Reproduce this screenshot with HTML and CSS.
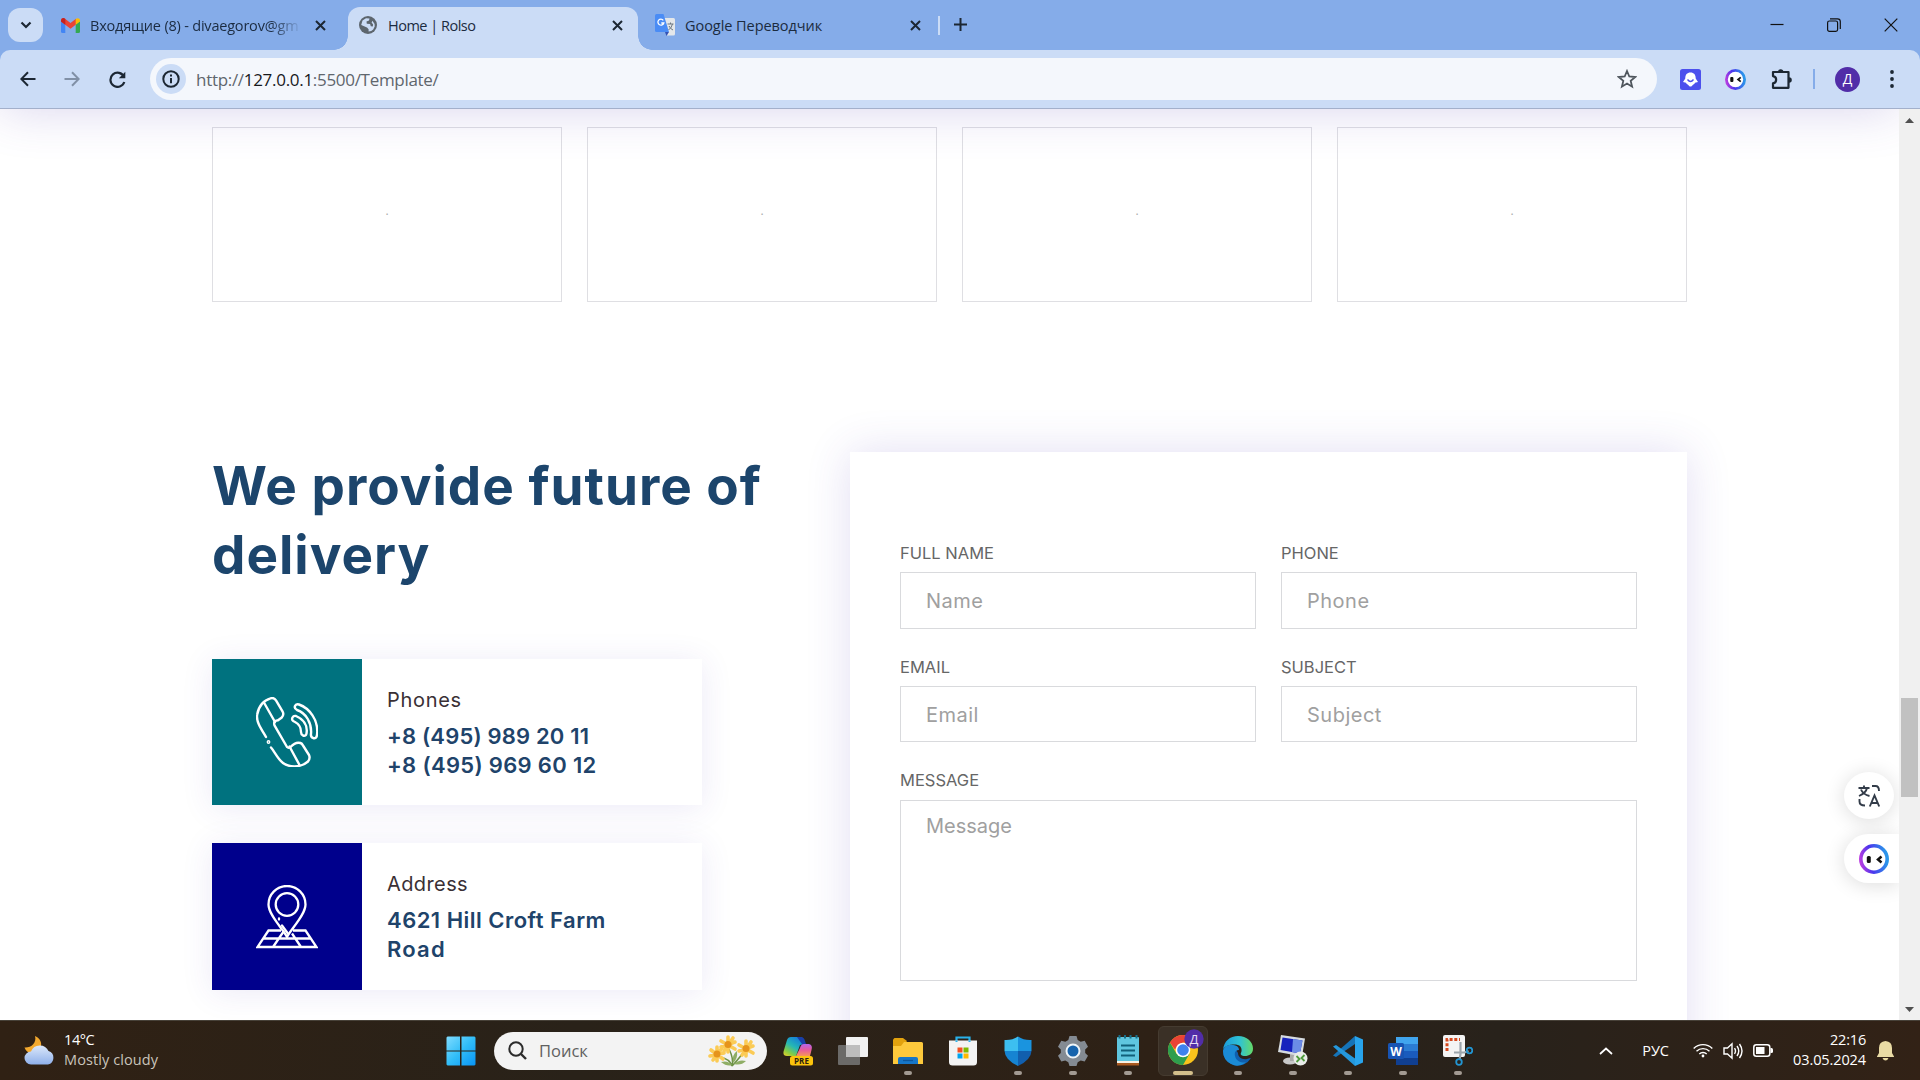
FILE: index.html
```html
<!DOCTYPE html>
<html lang="ru">
<head>
<meta charset="utf-8">
<title>Home | Rolso</title>
<link rel="stylesheet" href="styles.css">
</head>
<body>
<div class="screen">
  <header class="tabstrip">
    <button class="tab-search"><svg width="12" height="8" viewBox="0 0 12 8"><path d="M1.5 1.5 6 6l4.5-4.5" fill="none" stroke="#1c2733" stroke-width="2.2"/></svg></button>
    <div class="tab tab-mail">
      <svg class="favicon" width="19" height="15" viewBox="0 0 19 15"><path d="M0 3v10.5Q0 15 1.5 15H4.300V6.500z" fill="#4285f4"/><path d="M19 3v10.500q0 1.500-1.500 1.500h-2.800V6.500z" fill="#34a853"/><path d="M0 2.500C0 .5 2.200-.5 4 .8L9.500 5 15 .8v5.700l-5.500 4.200L0 3.600z" fill="#ea4335"/><path d="M0 2.500Q.3 0 2.500.1 3.500.2 4.300 1v5.800L0 3.600z" fill="#c5221f"/><path d="M14.700 1C16.500-.6 19 .2 19 2.500v1.100l-4.300 3.200z" fill="#fbbc04"/></svg>
      <span class="tab-title fade">Входящие (8) - divaegorov@gm</span>
      <svg class="close" width="11" height="11" viewBox="0 0 11 11"><path d="m1 1 9 9M10 1l-9 9"/></svg>
    </div>
    <div class="tab tab-active">
      <svg class="favicon" width="18" height="18" viewBox="0 0 18 18"><circle cx="9" cy="9" r="9" fill="#5d666e"/><path d="M3.500 4.500 7 2.200l3.500.3-.5 2-2.500 1 .3 2.200 3.300.3.700 2.300 2 .2.300-2-1.500-2 .8-1.800 2.200 3.200.1 2.600-1.500 3-2 1.500-2.600.4v-2.200l-1.600-1.800L4.500 10 2.200 9z" fill="#cbdcf6"/></svg>
      <span class="tab-title">Home | Rolso</span>
      <svg class="close" width="11" height="11" viewBox="0 0 11 11"><path d="m1 1 9 9M10 1l-9 9"/></svg>
    </div>
    <div class="tab tab-translate">
      <svg class="favicon" width="20" height="22" viewBox="0 0 20 22"><path d="M8 4h10.500Q20 4 20 5.500V20q0 1.500-1.500 1.500H12z" fill="#e4e7ea"/><path d="M10 18h4l-2.500 4z" fill="#3452b5"/><path d="M1.500 0h7L14 18H1.500Q0 18 0 16.500v-15Q0 0 1.500 0z" fill="#4a8cf5"/><path d="M8.300 6.300A3 3 0 1 0 8.800 9H6.300" fill="none" stroke="#fff" stroke-width="1.300"/><path d="M12.500 10h6M15.500 8.500V10M17.500 10q-1 4-4 6M14 12q1.500 3 4 4" fill="none" stroke="#6c7780"/></svg>
      <span class="tab-title">Google Переводчик</span>
      <svg class="close" width="11" height="11" viewBox="0 0 11 11"><path d="m1 1 9 9M10 1l-9 9"/></svg>
    </div>
    <i class="tab-divider"></i>
    <svg class="new-tab" width="13" height="13" viewBox="0 0 13 13"><path d="M6.500 0v13M0 6.500h13" stroke="#1c2733" stroke-width="2"/></svg>
    <div class="window-buttons">
      <svg width="14" height="14" viewBox="0 0 14 14"><path d="M.5 6.500h13"/></svg>
      <svg width="14" height="14" viewBox="0 0 14 14"><rect x=".6" y="3" width="10" height="10.300" rx="1.800"/><path d="M3 .8h7.500q2.800 0 2.800 2.800v7.400"/></svg>
      <svg width="14" height="14" viewBox="0 0 14 14"><path d="m.7.700 12.600 12.600M13.300.700.700 13.300"/></svg>
    </div>
  </header>

  <nav class="toolbar">
    <svg class="nav-back" width="16" height="16" viewBox="0 0 16 16"><path d="M15.500 8H1.800M8 1.300 1.300 8 8 14.700" fill="none" stroke="#1c2733" stroke-width="2"/></svg>
    <svg class="nav-forward" width="16" height="16" viewBox="0 0 16 16"><path d="M.5 8h13.700M8 1.300 14.700 8 8 14.700" fill="none" stroke="#8190a6" stroke-width="2"/></svg>
    <svg class="nav-reload" width="17" height="17" viewBox="0 0 17 17"><path d="M15 5.800A7.100 7.100 0 1 0 15.300 11" fill="none" stroke="#1c2733" stroke-width="2.200"/><path d="M16.300.8v6.500H9.800z" fill="#1c2733"/></svg>
    <div class="omnibox">
      <span class="site-info"><svg width="18" height="18" viewBox="0 0 18 18"><circle cx="9" cy="9" r="7.700" fill="none" stroke="#1c2733" stroke-width="2"/><path d="M9 4.600v2M9 7.900v5.400" stroke="#1c2733" stroke-width="2"/></svg></span>
      <span class="url">http://<b>127.0.0.1</b>:5500/Template/</span>
      <svg class="star" width="20" height="20" viewBox="0 0 20 20"><path d="m10 2 2.300 5.500 6 .5-4.600 3.900 1.400 5.800-5.100-3.100-5.100 3.100 1.400-5.800L1.700 8l6-.5z" fill="none" stroke="#4f565d" stroke-width="1.800"/></svg>
    </div>
    <svg class="ext-ghost" width="21" height="21" viewBox="0 0 21 21"><rect width="21" height="21" rx="2.500" fill="#4c50ed"/><path d="M10.500 3.500c3.500 0 5.300 2.300 5.200 6l2.300 3.500-3 .8c-.5 2-2 1.300-2.500 2.500-.9 1.700-3.100 1.700-4 0-.5-1.200-2-.5-2.500-2.500l-3-.8 2.300-3.500c-.1-3.700 1.700-6 5.200-6z" fill="#fff"/><path d="M7.500 10.500q3 4 6 0" fill="none" stroke="#4c50ed" stroke-width="1.300"/></svg>
    <svg class="ext-bot" width="21" height="21" viewBox="0 0 30 30"><defs><linearGradient id="ring" x1="0" y1=".75" x2="1" y2=".6"><stop offset="0" stop-color="#b93de0"/><stop offset=".4" stop-color="#4b35ed"/><stop offset="1" stop-color="#2b96ea"/></linearGradient></defs><circle cx="15" cy="15" r="13" fill="#fff" stroke="url(#ring)" stroke-width="4"/><rect x="7.500" y="11.500" width="4.500" height="7" rx="1.500" fill="#111"/><path d="m22.500 12-3.800 3 3.800 3" fill="none" stroke="#111" stroke-width="2.500"/></svg>
    <svg class="ext-puzzle" width="21" height="21" viewBox="0 0 21 21"><path d="M2 3h15.500v15.800H2V14.300c4.200-.8 4.200-6.500 0-7.200z" fill="none" stroke="#1c2733" stroke-width="2.200" stroke-linejoin="round"/><path d="M7 3a2.700 2.700 0 0 1 5.400 0M18 8.200a2.800 2.800 0 0 1 0 5.600" fill="#1c2733"/></svg>
    <i class="toolbar-divider"></i>
    <span class="avatar">Д</span>
    <svg class="menu" width="4" height="18" viewBox="0 0 4 18"><circle cx="2" cy="2" r="1.900"/><circle cx="2" cy="9" r="1.900"/><circle cx="2" cy="16" r="1.900"/></svg>
  </nav>

  <div class="viewport">
    <main class="page">
      <div class="sticky-shadow"></div>
      <section class="brands">
        <div class="brand">.</div><div class="brand">.</div><div class="brand">.</div><div class="brand">.</div>
      </section>
      <section class="contact">
        <div class="contact-info">
          <h2>We provide future of<br>delivery</h2>
          <article class="info-card">
            <div class="info-icon teal">
              <svg width="62" height="70" viewBox="0 0 62 70" fill="none" stroke="#fff" stroke-width="2.400" stroke-linecap="round" stroke-linejoin="round"><path d="M10 40C4 30 0 24 1.200 17.500 2.500 9 8 3 14.500 1.300q3.500-1 5.500 2l6.500 11q2 3.500-1 6.500l-3.500 2.500q-5 .5-3.500 5L31 50q1.500 1.500 3.500 0 5-5.500 10-4 1.500.5 2.500 2.500l6 9.500q1.500 3.500-1 6.500C44 71.500 32 70 27 66 21 61 19 55 15 50.500"/><path d="M8.500 6.500 19 25M33.500 49.500l10 18.500"/><circle cx="12.500" cy="45" r=".7"/><path d="M43 7.500C53 11 63 23 61 38q-.5 4-4 3-2.500-1-2-4C56 26 50 16 41 13q-3-1.500-2-4 1-2.500 4-1.500zM40 19c7 3 12 9 10.500 17.500q-.5 3-3.500 2-2-1-2-3.500 0-7-6-10-4-1.500-2.500-4.500 1-2 3.500-1.500z"/></svg>
            </div>
            <div class="info-text"><p class="t-phones">Phones</p><h4><span class="t-ph1">+8 (495) 989 20 11</span><br><span class="t-ph2">+8 (495) 969 60 12</span></h4></div>
          </article>
          <article class="info-card tall">
            <div class="info-icon navy">
              <svg width="62" height="64" viewBox="0 0 62 64" fill="none" stroke="#fff" stroke-width="2.300"><path d="M31 52C27 44 12.500 30 12.500 19.500a18.500 18.500 0 0 1 37 0C49.500 30 35 44 31 52z"/><circle cx="31" cy="19.500" r="11.300"/><path d="M25 45.500H12.500L1.500 62h59L49.500 45.500H37M8 53.500h46M17 62l7.500-11M45 62 36 48.500M24.500 51 28 46"/><path d="m26 40.500 5.500 7.500M23 33.500v1" stroke-linecap="round"/></svg>
            </div>
            <div class="info-text"><p>Address</p><h4><span class="t-ad1">4621 Hill Croft Farm</span><br><span class="t-ad2">Road</span></h4></div>
          </article>
        </div>
        <form class="contact-form">
          <label class="field">FULL NAME<input type="text" placeholder="Name"></label>
          <label class="field">PHONE<input type="text" placeholder="Phone"></label>
          <label class="field short">EMAIL<input type="text" placeholder="Email"></label>
          <label class="field short">SUBJECT<input type="text" placeholder="Subject"></label>
          <label class="field wide">MESSAGE<textarea placeholder="Message"></textarea></label>
        </form>
      </section>
      <div class="float-translate">
        <svg width="22" height="22" viewBox="0 0 22 22" fill="none" stroke="#333c49" stroke-width="1.900"><path d="M.5 3h11M6 .5V3M9 3Q8 8 1 11M3 4.500Q5 9.500 11.500 11M14 1h3.500Q21 1 21 6M1.500 14v2.500q0 4 5.500 4"/><path d="m11.800 21.500 4.700-11 4.700 11M13.500 18h6"/></svg>
      </div>
      <div class="float-bot">
        <svg width="30" height="30" viewBox="0 0 30 30"><circle cx="15" cy="15" r="13.200" fill="#fff" stroke="url(#ring)" stroke-width="3.600"/><rect x="7.800" y="12" width="4" height="7" rx="1.500" fill="#111"/><path d="m22.500 12.500-3.500 3 3.500 3" fill="none" stroke="#111" stroke-width="2.500"/></svg>
      </div>
    </main>
    <aside class="scrollbar">
      <svg width="9" height="5" viewBox="0 0 9 5"><path d="M4.500 0 9 5H0z" fill="#505050"/></svg>
      <div class="thumb"></div>
      <svg class="down" width="9" height="5" viewBox="0 0 9 5"><path d="M4.500 5 9 0H0z" fill="#505050"/></svg>
    </aside>
  </div>

  <footer class="taskbar">
    <div class="weather">
      <svg width="31" height="31" viewBox="0 0 31 31"><defs><linearGradient id="cloud" x2="0" y2="1"><stop stop-color="#dce8fa"/><stop offset="1" stop-color="#8fb0ea"/></linearGradient></defs><path d="M11 1c8 3 9 14-1 16.500-5 1.200-8-1-9.500-5C7 13 13 8 11 1z" fill="#f3a92f"/><path d="M7 29.500a6.500 6.500 0 0 1 0-13 9.500 9.500 0 0 1 17.500-.5A7 7 0 0 1 24 29.500z" fill="url(#cloud)"/></svg>
      <div class="weather-text"><span class="t-temp">14°C</span><span class="t-sky">Mostly cloudy</span></div>
    </div>
    <div class="apps">
      <svg class="start" width="30" height="30" viewBox="0 0 30 30"><defs><linearGradient id="win" x2="1" y2="1"><stop stop-color="#7fdcff"/><stop offset=".5" stop-color="#31bdf8"/><stop offset="1" stop-color="#0894f5"/></linearGradient></defs><path d="M1.500.500H14v14H.500v-13zM15.500.500h13l1 1v13h-14zM.500 15.500H14v14H1.500l-1-1zM15.500 15.500h14v13l-1 1h-13z" fill="url(#win)"/></svg>
      <div class="search">
        <svg width="19" height="19" viewBox="0 0 19 19"><circle cx="8" cy="8" r="6.700" fill="none" stroke="#2b2b2b" stroke-width="2"/><path d="m13 13 5 5" stroke="#2b2b2b" stroke-width="2.400"/></svg>
        <span>Поиск</span>
        <svg class="flowers" width="50" height="32" viewBox="0 0 50 32"><path d="M25 31Q23 24 13 22M25 31Q27 24 22 14M25 31Q29 27 36 18" fill="none" stroke="#6c9145" stroke-width="1.500"/><path d="M25 30q-5 2-11-3 7-2 11 3zM26 28q-1-9 4-12 1 8-4 12zM27 29q5-5 12-3-5 5-12 3z" fill="#8fae66"/><g stroke="#fbcb55" stroke-width="3.600" stroke-linecap="round"><path d="M10 12v14M4 15l12 9M3 21l14-3M15 13 6 25"/><path d="M21 2v15M14 6l14 8M14 12l14-5M26 3l-9 13"/><path d="M39 6v15M32 10l14 8M32 16l14-5M44 7l-9 13"/></g><g fill="#e5941c"><circle cx="10" cy="19" r="3.500"/><circle cx="21" cy="9.500" r="3.500"/><circle cx="39" cy="13.500" r="3.500"/></g></svg>
      </div>
      <div class="app"><svg width="30" height="30" viewBox="0 0 30 30"><defs><linearGradient id="cp1" x1=".7" y1="0" x2="0" y2="1"><stop stop-color="#1479dc"/><stop offset=".45" stop-color="#25b7b5"/><stop offset=".75" stop-color="#86cc43"/><stop offset="1" stop-color="#f0cf28"/></linearGradient><linearGradient id="cp2" x2="0" y2="1"><stop stop-color="#b465ed"/><stop offset=".5" stop-color="#e85b9a"/><stop offset="1" stop-color="#f59757"/></linearGradient></defs><path d="M8 1h9q3 0 4 4l1 3-5 1-4 11H4q-5 0-3-6L4 4q1-3 4-3z" fill="url(#cp1)"/><path d="M14 1h4q3 0 4 4l1 3h-4z" fill="#193fa8"/><path d="M21 8h5q4 1 2.500 6L27 20H13l4-8q1-4 4-4z" fill="url(#cp2)"/><rect x="7" y="20" width="23" height="9.500" rx="2.500" fill="#fcc40c"/><text x="18.500" y="27.700" class="pre" text-anchor="middle">PRE</text></svg></div>
      <div class="app"><svg width="30" height="28" viewBox="0 0 30 28"><rect x="8" width="22" height="20" rx="1" fill="#f1f1f1"/><rect y="8" width="22" height="20" rx="1" fill="#777" opacity=".85"/><path d="M8 8h14v12H8z" fill="#bdbdbd"/></svg></div>
      <div class="app on"><svg width="30" height="28" viewBox="0 0 30 28"><path d="M1.500 1H10l4 3-3 5H0V2.500z" fill="#e2a20e"/><path d="M11 5h17.500Q30 5 30 6.500V27H0V9h8z" fill="#fdc93c"/><path d="M5 27v-5q0-2 2-2h16q2 0 2 2v5z" fill="#1676c8"/><path d="M10 23.500h10" stroke="#0d569c" stroke-width="1.300"/></svg></div>
      <div class="app"><svg width="30" height="30" viewBox="0 0 30 30"><path d="M8.500 6V1.500h13V6" fill="none" stroke="#29b1ea" stroke-width="2.200"/><path d="M1 4.500h28V26q0 3.500-3.500 3.500h-21Q1 29.500 1 26z" fill="#f3f3f3"/><path d="M8.500 4.500V6M21.500 4.500V6" stroke="#29b1ea" stroke-width="2"/><path d="M9.500 11.500h5v5h-5z" fill="#f25022"/><path d="M15.500 11.500h5v5h-5z" fill="#7fba00"/><path d="M9.500 17.500h5v5h-5z" fill="#00a4ef"/><path d="M15.500 17.500h5v5h-5z" fill="#ffb900"/></svg></div>
      <div class="app on"><svg width="30" height="30" viewBox="0 0 30 30"><path d="M15 .500q6 4 13.500 3.500v11H15z" fill="#1a94df"/><path d="M15 .500Q9 4.500 1.500 4v11H15z" fill="#3dbff0"/><path d="M1.500 15H15v15Q2 24 1.500 15z" fill="#1684d2"/><path d="M28.500 15H15v15q13-6 13.500-15z" fill="#115fae"/></svg></div>
      <div class="app on"><svg width="30" height="30" viewBox="0 0 30 30"><path d="M11.500 0h7l1.200 4 3 1.700 4-1 3.300 6-2.800 2.900v3.300l2.800 2.900-3.300 5.700-4-1-3 1.700-1.200 3.800h-7l-1.200-3.800-3-1.700-4 1L0 19.800l2.800-2.900v-3.300L0 10.700l3.300-6 4 1 3-1.700z" fill="#848b93"/><circle cx="15" cy="15" r="6.500" fill="#1764ad" stroke="#eef4f8" stroke-width="2"/></svg></div>
      <div class="app on"><svg width="24" height="31" viewBox="0 0 24 31"><rect x="1" y="2" width="22" height="28" rx="1" fill="#5fc6df"/><path d="M1 26h22v2H1z" fill="#f6f1e6"/><path d="M1 28h22v2.500H1z" fill="#a85920"/><path d="M5 10.500h14M5 15.500h14M5 20.500h14" stroke="#11607a" stroke-width="1.900"/><path d="M3.500 0v3.500M9 0v3.500M14.500 0v3.500M20.500 0v3.500" stroke="#176e88" stroke-width="2"/></svg></div>
      <div class="app on current"><svg width="36" height="36" viewBox="0 0 36 36"><g transform="translate(0 6)"><circle cx="15" cy="15" r="15" fill="#f9c31c"/><path d="M2 7.500A15 15 0 0 0 15 30l6.500-11.300H8.500z" fill="#2e9e4e"/><path d="M2 7.500A15 15 0 0 1 28 7.500H15L9 12.500 6.500 14z" fill="#ea4335"/><circle cx="15" cy="15" r="7.300" fill="#fff"/><circle cx="15" cy="15" r="5.800" fill="#3f82ef"/></g><circle cx="26" cy="10" r="9.700" fill="#512da8"/><text x="26" y="14.500" text-anchor="middle" class="badge">Д</text></svg></div>
      <div class="app on"><svg width="30" height="30" viewBox="0 0 30 30"><defs><linearGradient id="ed" x2="1"><stop stop-color="#1b9bdc"/><stop offset=".55" stop-color="#2fc2d5"/><stop offset="1" stop-color="#65da68"/></linearGradient></defs><path d="M0 14a15 15 0 0 0 28 8q-1 0-4 1c-5 1-9-2-9-6L10 9z" fill="#0f5fae"/><path d="M0 15C1 10 6 8 10 9c5 .5 6 3 6 5-3 0-5 2-4 6 1 5 6 7 11 6.500Q15 32 8 28 0 24 0 15z" fill="#1b8bd6"/><path d="M0 14C1 5 7 0 15 0c9 0 15 6 15 12.500 0 5.500-4 7.500-8 7.500-3.500 0-5-1.500-4-3 1.500-3 .5-8-5-8.500C7 8 1 10 0 14z" fill="url(#ed)"/></svg></div>
      <div class="app on"><svg width="30" height="31" viewBox="0 0 30 31"><ellipse cx="12" cy="26" rx="7" ry="3.500" fill="#c9c9c9"/><path d="M12 19h6v7h-6z" fill="#aaa"/><path d="M3 0 27 3.500l-3 18L0 17z" fill="#d6dbe0"/><path d="m4.500 2.500 20 3-2.500 13L2.500 15z" fill="#1722bd"/><path d="m15 4 9.500 1.500-2.500 13-8-1.400z" fill="#6b8ce6"/><circle cx="22.500" cy="23.500" r="7" fill="#e9ece9"/><path d="m18.500 21 3 3-3 3M26.500 20l-3 3 3 3" fill="none" stroke="#4f9b3c" stroke-width="1.800"/></svg></div>
      <div class="app on"><svg width="30" height="30" viewBox="0 0 30 30"><path d="M0 19.500 3 21l19-13V0z" fill="#1674b8"/><path d="M0 10.500 3 9l19 13.500V30z" fill="#2598dc"/><path d="M22 0l8 3.500v23L22 30z" fill="#28a4ec"/></svg></div>
      <div class="app on"><svg width="30" height="28" viewBox="0 0 30 28"><path d="M8 0h22v28H9.500Q8 28 8 26z" fill="#1a5bbd"/><path d="M8 0h22v7H8z" fill="#41a5ee"/><path d="M8 7h22v7H8z" fill="#2b7cd3"/><path d="M8 21h22v7H8z" fill="#103f91"/><rect y="6" width="16" height="16" rx="1.500" fill="#1854b3"/><text x="8" y="18.500" text-anchor="middle" class="word">W</text></svg></div>
      <div class="app on"><svg width="30" height="31" viewBox="0 0 30 31"><rect width="22" height="22" rx="2" fill="#f4f4f4"/><path d="M4 16V4.500H17" fill="none" stroke="#d6481e" stroke-width="3" stroke-dasharray="3 1.700"/><path d="M17.500 7v12l-1 6M11 17.500h10.500l4-1.500" fill="none" stroke="#9ca5ac" stroke-width="2.200"/><circle cx="26.500" cy="15.500" r="2.800" fill="none" stroke="#2295d2" stroke-width="1.800"/><circle cx="16" cy="27" r="2.800" fill="none" stroke="#2295d2" stroke-width="1.800"/></svg></div>
    </div>
    <div class="tray">
      <svg class="chev" width="14" height="8" viewBox="0 0 14 8"><path d="m1 7 6-5.500L13 7" fill="none" stroke="#fff" stroke-width="1.700"/></svg>
      <span class="lang">РУС</span>
      <svg class="wifi" width="20" height="15" viewBox="0 0 20 15" fill="none" stroke="#fff" stroke-width="1.400"><path d="M.7 5.500a13 13 0 0 1 18.600 0M3.500 8.300a9.200 9.200 0 0 1 13 0M6.300 11a5.300 5.300 0 0 1 7.400 0"/><circle cx="10" cy="13" r="1.400" fill="#fff" stroke="none"/></svg>
      <svg class="vol" width="20" height="18" viewBox="0 0 20 18" fill="none" stroke="#fff" stroke-width="1.400"><path d="M1 6h3.500L9 1.800v14.400L4.500 12H1zM11.500 6.200q2 2.800 0 5.600M14 4q3.500 5 0 10M16.500 2q5 7 0 14"/></svg>
      <svg class="battery" width="20" height="13" viewBox="0 0 20 13"><rect x=".8" y=".8" width="16" height="11.400" rx="2.500" fill="none" stroke="#fff" stroke-width="1.500"/><rect x="3" y="3" width="8.500" height="7" fill="#fff"/><path d="M17.500 4h1q1.500 0 1.500 1.500v2Q20 9 18.500 9h-1z" fill="#fff"/></svg>
      <div class="clock"><span>22:16</span><span class="t-date">03.05.2024</span></div>
      <svg class="bell" width="17" height="20" viewBox="0 0 17 20"><path d="M8.500 0q6.500.5 6.500 7v5l2 3.500v.5H0v-.5L2 12V7Q2 .500 8.500 0zM5.500 17h6q-1 2.500-3 2.500T5.500 17z" fill="#e9dba4"/></svg>
    </div>
  </footer>
</div>
</body>
</html>
```
FILE: styles.css
```css
* { box-sizing: border-box; }
body { margin: 0; font-family: "Open Sans", "Noto Sans", sans-serif; }
svg { display: block; flex: none; }
.screen { width: 1920px; height: 1080px; overflow: hidden; display: flex; flex-direction: column; background: #fff; }

/* tab strip */
.tabstrip { height: 50px; flex: none; background: #85ace9; display: flex; align-items: flex-start; padding: 7px 0 0 8px; }
.tab-search { width: 35px; height: 34px; margin-top: 1px; padding: 0; border: 0; border-radius: 12px; background: #cbdcf6; display: flex; align-items: center; justify-content: center; }
.tab { height: 43px; display: flex; align-items: center; padding-bottom: 7px; position: relative; }
.tab-mail { width: 305px; padding-left: 18px; }
.tab-active { width: 290px; padding-left: 11px; background: #cbdcf6; border-radius: 12px 12px 0 0; }
.tab-active::before, .tab-active::after { content: ""; position: absolute; bottom: 0; width: 14px; height: 14px; }
.tab-active::before { left: -14px; background: radial-gradient(circle at 0 0, transparent 13.500px, #cbdcf6 14px); }
.tab-active::after { right: -14px; background: radial-gradient(circle at 100% 0, transparent 13.500px, #cbdcf6 14px); }
.tab-translate { width: 300px; padding-left: 17px; }
.tab-title { width: 214px; margin-left: 10px; padding-top: 2px; white-space: nowrap; font-size: 14.500px; line-height: 24px; color: #1b2b40; letter-spacing: -.2px; }
.tab-active .tab-title { margin-left: 11px; letter-spacing: -.5px; }
.tab-translate .tab-title { letter-spacing: -.05px; }
.tab-active .close { margin-right: 15px; }
.fade { -webkit-mask-image: linear-gradient(90deg, #000 180px, transparent 212px); mask-image: linear-gradient(90deg, #000 180px, transparent 212px); }
.close { stroke: #1c2733; stroke-width: 2; margin-left: auto; }
.tab-mail .close { margin-right: 22px; }
.tab-translate .close { margin-right: 17px; }
.tab-divider { width: 2px; height: 19px; margin-top: 9px; background: #cbdcf6; }
.new-tab { margin: 11px 0 0 14px; }
.window-buttons { margin-left: auto; padding: 11px 22px 0 0; display: flex; gap: 43px; }
.window-buttons svg { fill: none; stroke: #111; stroke-width: 1.200; }

/* toolbar */
.toolbar { height: 59px; flex: none; display: flex; align-items: center; background: #cbdcf6; border-bottom: 1px solid #a3b0cb; padding-left: 20px; border-radius: 10px 10px 0 0; box-shadow: 0 -12px 0 -2px #85ace9; clip-path: inset(0); }
.screen { background: linear-gradient(#85ace9 70px, #fff 70px); }
.nav-forward { margin-left: 28px; }
.nav-reload { margin-left: 29px; }
.omnibox { width: 1507px; height: 42px; margin-left: 24px; border-radius: 21px; background: #f4f7fc; display: flex; align-items: center; padding: 0 20px 0 6px; }
.site-info { width: 30px; height: 30px; border-radius: 50%; background: #cbdcf6; display: flex; align-items: center; justify-content: center; }
.url { margin-left: 10px; padding-top: 1px; font-size: 17px; letter-spacing: -.3px; color: #5f666d; }
.url b { font-weight: 400; color: #17191c; }
.star { margin-left: auto; }
.ext-ghost { margin-left: 23px; }
.ext-bot { margin-left: 24px; }
.ext-puzzle { margin-left: 25px; }
.toolbar-divider { width: 2px; height: 20px; margin-left: 21px; background: #85ace9; }
.avatar { width: 25px; height: 25px; margin-left: 20px; border-radius: 50%; background: #512da8; color: #fff; font-size: 14px; line-height: 24px; text-align: center; }
.menu { margin-left: 30px; fill: #1c2733; }

/* web page */
.viewport { height: 911px; flex: none; display: flex; background: #fff; }
.page { flex: 1; height: 911px; overflow: hidden; position: relative; padding: 18px 212px 0; }
.sticky-shadow { position: absolute; left: 0; right: 0; top: -100px; height: 100px; box-shadow: 0 0 50px rgba(92, 72, 180, .24); clip-path: inset(0 0 -80px 0); }
.brands { display: grid; grid-template-columns: repeat(4, 350px); gap: 25px; }
.brand { height: 175px; padding-bottom: 8px; border: 1px solid #dfdfe3; display: flex; align-items: center; justify-content: center; color: #aaa; font-size: 12px; }
.contact { display: flex; margin-top: 150px; }
.contact-info { width: 638px; flex: none; }
.contact h2 { height: 207px; margin: 0; color: #1c456c; font: 700 53px/69px Inter, sans-serif; letter-spacing: 1px; white-space: nowrap; }
.info-card { width: 490px; height: 146px; margin-bottom: 38px; display: flex; background: #fff; box-shadow: 0 3px 30px rgba(72, 52, 180, .1); }
.info-card.tall { height: 147px; }
.info-icon { width: 150px; display: flex; align-items: center; justify-content: center; }
.teal { background: #00727f; }
.navy { background: #00008c; }
.info-text { padding: 27px 0 0 25px; }
.info-text p { margin: 0; color: #3a3035; font: 400 20px/29px Inter, sans-serif; letter-spacing: .4px; }
.info-text .t-phones { letter-spacing: .7px; }
.info-text h4 { margin: 7px 0 0; color: #20436a; font: 600 22px/29px Inter, sans-serif; white-space: nowrap; }
.t-ph1 { letter-spacing: .17px; }
.t-ph2 { letter-spacing: .32px; }
.t-ad1 { letter-spacing: .48px; }
.t-ad2 { letter-spacing: 1.200px; }
.contact-form { width: 837px; height: 620px; padding: 90px 50px 0; display: grid; grid-template-columns: 356px 356px; gap: 0 25px; align-content: start; background: #fff; box-shadow: 0 0 42px rgba(72, 52, 180, .16); }
.field { height: 114px; display: flex; flex-direction: column; color: #666; font: 400 16.500px/22px Inter, sans-serif; }
.field input, .field textarea { margin: 8px 0 0; padding: 0 25px; width: 100%; height: 57px; border: 1px solid #d9dadd; border-radius: 0; background: #fff; font: 400 20px/26px Inter, sans-serif; letter-spacing: .5px; outline: 0; resize: none; }
.short input { height: 56px; padding-top: 2px; }
.wide { grid-column: span 2; height: 220px; margin-top: -1px; }
.wide textarea { height: 181px; margin-top: 9px; padding-top: 12px; letter-spacing: 0; }
.field ::placeholder { color: #a0a0a0; opacity: 1; }

/* floating helpers */
.float-translate, .float-bot { position: absolute; right: 5px; top: 663px; width: 50px; height: 47px; border-radius: 50%; background: #fff; display: flex; align-items: center; justify-content: center; box-shadow: 0 2px 20px rgba(0, 0, 0, .14); }
.float-bot { right: 0; top: 725px; width: 55px; height: 49px; border-radius: 25px 0 0 25px; padding-left: 4px; }
.scrollbar { width: 21px; background: #f0f0f0; display: flex; flex-direction: column; align-items: center; padding: 9px 0 8px; }
.thumb { width: 17px; height: 99px; margin-top: 575px; background: #c1c1c1; }
.down { margin-top: auto; }

/* taskbar */
.taskbar { height: 60px; flex: none; background: linear-gradient(90deg, #302114, #292219 30%, #2e2116 60%, #28221b 78%, #322216); border-top: 1px solid #474138; display: flex; align-items: center; color: #fff; }
.weather { width: 422px; padding-left: 24px; display: flex; align-items: center; }
.weather-text { margin: -2px 0 0 9px; display: flex; flex-direction: column; align-items: flex-start; font-size: 14.500px; line-height: 20px; }
.t-temp { letter-spacing: -.4px; }
.t-sky { color: #c9c4bb; letter-spacing: .1px; }
.apps { display: flex; align-items: center; }
.start { margin-left: 24px; }
.search { width: 273px; height: 38px; margin: 0 6px 0 18px; padding: 0 10px 0 14px; border-radius: 19px; background: #f3f3f3; color: #606060; display: flex; align-items: center; font-size: 16.500px; }
.search span { margin-left: 12px; }
.flowers { margin-left: auto; }
.app { width: 50px; height: 50px; margin-right: 5px; border-radius: 6px; display: flex; align-items: center; justify-content: center; position: relative; }
.app.on::after { content: ""; position: absolute; bottom: 1px; left: 21px; width: 8px; height: 4px; border-radius: 2px; background: #a29a92; }
.app.current { background: #3a3026; border: 1px solid #453b30; }
.app.current svg { margin: -7px 0 0 5px; }
.app.current::after { left: 14px; bottom: 0; width: 20px; background: #d3bf8b; }
.pre { font: 700 8px "Open Sans", sans-serif; fill: #2b2110; }
.badge { font: 400 13px "Open Sans", sans-serif; fill: #e4dcf4; }
.word { font: 700 12px "Open Sans", sans-serif; fill: #fff; }
.tray { margin-left: auto; padding-right: 26px; display: flex; align-items: center; }
.chev { margin-right: 2px; }
.lang { margin-left: 27px; font-size: 14.500px; }
.wifi { margin-left: 24px; }
.vol { margin-left: 10px; }
.battery { margin-left: 10px; }
.clock { width: 93px; margin-top: -2px; display: flex; flex-direction: column; align-items: flex-end; font-size: 14.500px; line-height: 20px; letter-spacing: -.2px; }
.t-date { letter-spacing: -.1px; }
.bell { margin-left: 11px; }
```
